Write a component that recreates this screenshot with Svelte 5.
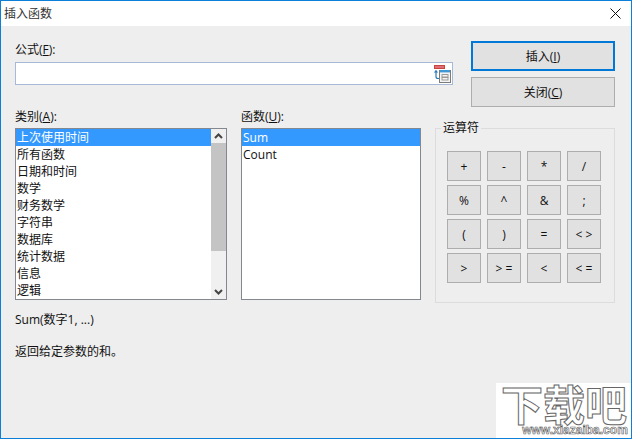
<script lang="ts">
    const categories = ['上次使用时间', '所有函数', '日期和时间', '数学', '财务数学', '字符串', '数据库', '统计数据', '信息', '逻辑'];
    const functions = ['Sum', 'Count'];
    const operators = ['+', '-', '*', '/', '%', '^', '&', ';', '(', ')', '=', '< >', '>', '> =', '<', '< ='];
</script>

<div class="dialog">
    <header class="titlebar">
        <span class="title">插入函数</span>
        <svg class="close" width="11" height="11" viewBox="0 0 11 11"><path d="M.5.5l10 10M10.5.5l-10 10" stroke="#111" fill="none" /></svg>
    </header>

    <main class="body">
        <section class="top">
            <div class="formula">
                <div class="lbl">公式(<u>F</u>):</div>
                <div class="input">
                    <svg class="fx" width="19" height="19" viewBox="0 0 19 19">
                        <rect x="1.5" y=".5" width="10" height="3" fill="#e06c75" stroke="#c9453f" />
                        <path d="M3 5.5V11.5a2 2 0 0 0 2 2H6" fill="none" stroke="#2b7bb9" stroke-width="1.2" />
                        <path d="M.8 7.5L3 5l2.2 2.5z" fill="#2b7bb9" />
                        <rect x="6.5" y="5.5" width="11" height="12" fill="#f4f4f4" stroke="#7b7b7b" />
                        <rect x="7" y="5" width="10" height="2.4" fill="#3f97d6" />
                        <rect x="9" y="9.5" width="6" height="2.5" fill="none" stroke="#9a9a9a" />
                        <rect x="9" y="12.5" width="6" height="2.5" fill="none" stroke="#9a9a9a" />
                    </svg>
                </div>
            </div>
            <div class="actions">
                <button class="btn primary">插入(<u>I</u>)</button>
                <button class="btn">关闭(<u>C</u>)</button>
            </div>
        </section>

        <section class="middle">
            <div class="col cat">
                <div class="lbl">类别(<u>A</u>):</div>
                <div class="list">
                    <div class="rows">
                        {#each categories as c, i}
                            <div class="row" class:sel={i === 0}>{c}</div>
                        {/each}
                    </div>
                    <div class="scroll">
                        <svg width="15" height="14" viewBox="0 0 15 14"><path d="M4 9l3.5-3.5L11 9" fill="none" stroke="#444" stroke-width="2" /></svg>
                        <div class="track"><div class="thumb"></div></div>
                        <svg width="15" height="14" viewBox="0 0 15 14"><path d="M4 5l3.5 3.5L11 5" fill="none" stroke="#444" stroke-width="2" /></svg>
                    </div>
                </div>
            </div>
            <div class="col fn">
                <div class="lbl">函数(<u>U</u>):</div>
                <div class="list">
                    <div class="rows">
                        {#each functions as f, i}
                            <div class="row" class:sel={i === 0}>{f}</div>
                        {/each}
                    </div>
                </div>
            </div>
            <fieldset class="ops">
                <legend>运算符</legend>
                <div class="grid">
                    {#each operators as op}
                        <button class="btn op">{op}</button>
                    {/each}
                </div>
            </fieldset>
        </section>

        <p class="sig">Sum(数字1, ...)</p>
        <p class="desc">返回给定参数的和。</p>
    </main>

    <div class="mark">
        <span class="big">下载吧</span>
        <span class="url">www.xiazaiba.com</span>
    </div>
</div>

<style>
    :global(body) {
        margin: 0;
    }

    .dialog {
        position: relative;
        box-sizing: border-box;
        width: 632px;
        height: 439px;
        overflow: hidden;
        border: 1px solid #0c7fd8;
        background: #eeeeee;
        color: #111;
        font: 12px/17px "Open Sans", "Noto Sans CJK SC", sans-serif;
    }

    .titlebar {
        display: flex;
        align-items: center;
        justify-content: space-between;
        height: 25px;
        padding: 0 10px 0 3px;
        background: #fff;
    }

    .title {
        color: #333;
    }

    .body {
        padding: 15px 16px 0 14px;
    }

    .top {
        display: flex;
        justify-content: space-between;
    }

    .formula {
        padding-top: 1px;
    }

    .lbl {
        height: 19px;
        line-height: 15px;
    }

    .formula .lbl {
        height: 20px;
    }

    .input {
        box-sizing: border-box;
        display: flex;
        justify-content: flex-end;
        align-items: center;
        width: 438px;
        height: 23px;
        border: 1px solid #a6b9d6;
        background: #fff;
    }

    .fx {
        margin-top: 1px;
    }

    .actions {
        display: flex;
        flex-direction: column;
        gap: 6px;
    }

    .btn {
        box-sizing: border-box;
        width: 144px;
        height: 30px;
        padding: 0;
        border: 1px solid #adadad;
        background: #e1e1e1;
        color: #111;
        font: inherit;
    }

    .primary {
        border: 2px solid #0078d7;
    }

    .middle {
        display: flex;
        margin-top: 2px;
    }

    .col {
        display: flex;
        flex-direction: column;
    }

    .cat {
        width: 212px;
        margin-right: 14px;
    }

    .fn {
        width: 180px;
        margin-right: 14px;
    }

    .list {
        box-sizing: border-box;
        display: flex;
        height: 172px;
        border: 1px solid #828790;
        background: #fff;
    }

    .rows {
        flex: 1;
    }

    .row {
        height: 17px;
        padding-left: 1px;
        white-space: nowrap;
    }

    .row.sel {
        background: #3399ff;
        color: #fff;
    }

    .scroll {
        display: flex;
        flex-direction: column;
        width: 15px;
        background: #f0f0f0;
    }

    .scroll svg {
        flex: none;
    }

    .track {
        flex: 1;
    }

    .thumb {
        height: 108px;
        background: #c4c4c4;
    }

    .ops {
        position: relative;
        box-sizing: border-box;
        width: 180px;
        height: 175px;
        margin: 19px 0 0;
        padding: 22px 0 0 11px;
        border: 1px solid #dcdcdc;
    }

    legend {
        position: absolute;
        top: -10px;
        left: 5px;
        padding: 0 2px;
        background: #eeeeee;
    }

    .grid {
        display: grid;
        grid-template-columns: repeat(4, 34px);
        grid-auto-rows: 30px;
        gap: 4px 6px;
    }

    .op {
        width: 34px;
    }

    .sig {
        margin: 8px 0 0;
    }

    .desc {
        margin: 15px 0 0;
    }

    .mark {
        position: absolute;
        right: -1px;
        bottom: -1px;
        display: flex;
        flex-direction: column;
        align-items: center;
        box-sizing: border-box;
        width: 136px;
        height: 56px;
        background: #fff;
        color: #fff;
    }

    .big {
        height: 41px;
        font: 700 42px/40px "Noto Sans CJK SC", sans-serif;
        -webkit-text-stroke: 1px #666;
        white-space: nowrap;
    }

    .url {
        font: 700 12px/13px "Liberation Sans", sans-serif;
        color: #fff;
        -webkit-text-stroke: 0.6px #555;
        padding-left: 22px;
    }
</style>
